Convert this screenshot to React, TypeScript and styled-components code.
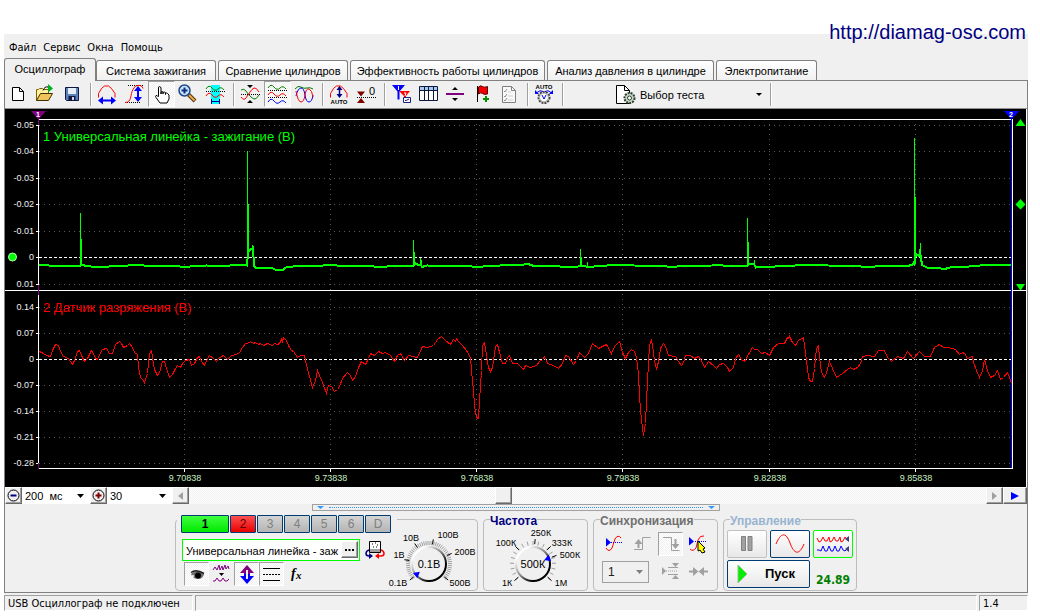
import React from "react";
import styled, { createGlobalStyle, css } from "styled-components";

const SANS = '"Liberation Sans", Arial, sans-serif';
const UI = '"DejaVu Sans Condensed", "DejaVu Sans", sans-serif';
const FACE = "#f0f0f0";
const checker = css`
  background: repeating-conic-gradient(#ffffff 0 25%, #f0f0f0 0 50%) 0 0 / 2px 2px;
`;

const GlobalStyle = createGlobalStyle`
  * { box-sizing: border-box; }
  body { margin: 0; background: #fff; color: #000; font: 11px/14px ${SANS}; }
  button, input, select { font: inherit; color: inherit; margin: 0; padding: 0; border-radius: 0; }
`;

const Page = styled.div`
  position: relative;
  padding: 34px 12px 5px 4px;
`;
const SiteLink = styled.a`
  position: absolute;
  top: 20px;
  right: 14px;
  font-size: 20px;
  line-height: 24px;
  color: #000080;
  text-decoration: none;
`;
const Window = styled.main`
  background: ${FACE};
`;
const MenuBar = styled.nav`
  display: flex;
  gap: 7px;
  height: 24px;
  padding: 7px 5px 0;
  font-family: ${UI};
`;
const MenuItem = styled.button`
  border: 0;
  background: none;
  height: 14px;
  line-height: 14px;
`;
const TabStrip = styled.div`
  display: flex;
  align-items: flex-end;
  gap: 2px;
  height: 22px;
`;
const Tab = styled.button<{ $active?: boolean; $w: number }>`
  width: ${(p) => p.$w}px;
  height: ${(p) => (p.$active ? 23 : 20)}px;
  margin-bottom: ${(p) => (p.$active ? -1 : 0)}px;
  margin-right: ${(p) => (p.$active ? -2 : 0)}px;
  padding-bottom: ${(p) => (p.$active ? 2 : 0)}px;
  border: 1px solid #808080;
  border-bottom: 0;
  border-radius: 3px 3px 0 0;
  background: ${(p) => (p.$active ? FACE : "linear-gradient(#ffffff, #f0f0f0)")};
  white-space: nowrap;
  z-index: ${(p) => (p.$active ? 1 : 0)};
`;
const TabPage = styled.div`
  border: 1px solid #808080;
`;
const Toolbar = styled.div`
  display: flex;
  align-items: center;
  height: 28px;
  border-bottom: 1px solid #909090;
  padding-bottom: 1px;
`;
const ToolButton = styled.button<{ $on?: boolean }>`
  display: flex;
  width: 27px;
  height: 26px;
  border: 1px solid transparent;
  background: none;
  ${(p) => p.$on && checker}
  ${(p) => p.$on && css`border-color: #a0a0a0 #fff #fff #a0a0a0;`}
  svg { flex: none; margin: 0 -1px; }
`;
const Divider = styled.span`
  flex: none;
  width: 2px;
  height: 23px;
  margin: 0 2px 0 4px;
  border-left: 1px solid #a0a0a0;
  border-right: 1px solid #fff;
`;
const TestPicker = styled.button`
  display: flex;
  align-items: center;
  gap: 4px;
  width: 150px;
  height: 26px;
  margin-left: 50px;
  padding-top: 1px;
  border: 0;
  background: none;
  text-align: left;
  span { flex: 1; }
`;
const Screen = styled.svg`
  display: block;
  width: 100%;
  height: auto;
  background: #000;
  border-right: 1px solid #fff;
`;
const ScrollRow = styled.div`
  display: flex;
  height: 17px;
  background: #fff;
`;
const Raised = styled.button<{ $w?: number }>`
  display: flex;
  flex: none;
  align-items: center;
  justify-content: center;
  width: ${(p) => p.$w || 17}px;
  height: 17px;
  border: 1px solid;
  border-color: #fff #696969 #696969 #fff;
  box-shadow: inset -1px -1px 0 #a0a0a0;
  background: ${FACE};
`;
const PickWrap = styled.label<{ $w: number }>`
  position: relative;
  display: block;
  flex: none;
  width: ${(p) => p.$w}px;
  svg { position: absolute; right: 6px; top: 7px; pointer-events: none; }
`;
const Pick = styled.select`
  appearance: none;
  display: block;
  width: 100%;
  height: 17px;
  border: 0;
  padding: 0 3px;
  background: #fff;
  white-space: pre;
  outline: none;
`;
const Track = styled.div`
  display: grid;
  grid-template-columns: 306fr 17px 474fr;
  flex: 1;
  ${checker}
  & > * { grid-column: 2; }
`;
const Splitter = styled.div`
  display: flex;
  align-items: center;
  gap: 5px;
  width: 408px;
  height: 7px;
  margin: 0 auto;
  padding: 0 4px;
  border: 1px solid #a0a0a0;
`;
const Dots = styled.span`
  flex: 1;
  height: 1px;
  border-top: 1px dotted #3399ff;
`;
const Panels = styled.div`
  display: flex;
  justify-content: center;
  gap: 5px;
  padding: 8px 0 1px;
  height: 81px;
`;
const Group = styled.section<{ $w: number }>`
  width: ${(p) => p.$w}px;
  height: 72px;
  border: 1px solid #bcbcbc;
  border-radius: 4px;
`;
const GroupTitle = styled.h2<{ $color: string }>`
  width: fit-content;
  height: 14px;
  margin: -6px 0 0 6px;
  font-size: 12px;
  line-height: 14px;
  font-weight: bold;
  color: ${(p) => p.$color};
  background: ${FACE};
`;
const ChannelGroup = styled(Group)`
  display: grid;
  grid-template-columns: 208px 1fr;
  align-items: start;
  & > svg { margin-top: 8px; }
`;
const ChannelRow = styled.div`
  display: flex;
  gap: 1px;
  width: 220px;
  height: 18px;
  margin: -5px 0 0 1px;
  padding-left: 4px;
  background: ${FACE};
`;
const channelTone = {
  green: "linear-gradient(#40ff40, #00e800)",
  red: "linear-gradient(#ff5050, #e80000)",
  off: "linear-gradient(#d4d4d4, #b4b4b4)",
};
const Channel = styled.button<{ $tone: "green" | "red" | "off" }>`
  flex: none;
  width: ${(p) => (p.$tone === "green" ? 48 : 26)}px;
  height: 18px;
  border: 1px solid #003c74;
  border-radius: 1px;
  background: ${(p) => channelTone[p.$tone]};
  color: ${(p) => (p.$tone === "off" ? "#808080" : p.$tone === "red" ? "#600000" : "#000")};
  font-weight: ${(p) => (p.$tone === "green" ? "bold" : "normal")};
  font-size: 12px;
  line-height: 14px;
`;
const NameRow = styled.div`
  display: flex;
  align-items: center;
  gap: 4px;
  margin: 5px 0 0 6px;
`;
const NameBox = styled.div`
  display: flex;
  flex: none;
  width: 178px;
  height: 22px;
  padding-top: 1px;
  padding-right: 1px;
  border: 1px solid #00ff00;
  background: #fff;
`;
const NameInput = styled.input`
  flex: 1;
  min-width: 0;
  border: 0;
  padding: 0 0 0 3px;
  outline: none;
  background: none;
`;
const IconButton = styled.button<{ $on?: boolean }>`
  display: flex;
  flex: none;
  width: 25px;
  height: 24px;
  border: 1px solid transparent;
  background: none;
  ${(p) => p.$on && checker}
  ${(p) => p.$on && css`border-color: #a0a0a0 #fff #fff #a0a0a0;`}
  svg { flex: none; margin: -1px; }
`;
const IconRow = styled.div`
  display: flex;
  padding-left: 8px;
`;
const Dial = styled.svg`
  display: block;
`;
const SyncGrid = styled.div`
  display: grid;
  grid-template-columns: repeat(4, 24px);
  column-gap: 4px;
  row-gap: 5px;
  padding: 4px 0 0 8px;
`;
const SyncSelect = styled.label`
  position: relative;
  display: block;
  grid-column: span 2;
  width: 47px;
  height: 22px;
  svg { position: absolute; right: 6px; top: 9px; pointer-events: none; }
  select {
    appearance: none;
    width: 47px;
    height: 22px;
    padding: 0 5px;
    border: 1px solid #a0a0a0;
    background: ${FACE};
    color: #202020;
    opacity: 1;
    font-size: 12px;
    outline: none;
  }
`;
const ControlGrid = styled.div`
  display: grid;
  grid-template-columns: 40px 40px 40px;
  grid-template-rows: 28px 28px;
  gap: 2px 3px;
  padding: 2px 0 0 3px;
`;
const PushButton = styled.button<{ $edge: string; $wide?: boolean }>`
  display: flex;
  align-items: center;
  justify-content: ${(p) => (p.$wide ? "space-between" : "center")};
  grid-column: ${(p) => (p.$wide ? "span 2" : "auto")};
  padding: ${(p) => (p.$wide ? "0 14px 0 9px" : "0")};
  border: 1px solid ${(p) => p.$edge};
  border-radius: 2px;
  background: linear-gradient(#ffffff, #e8e8e8);
  font-size: 13px;
  font-weight: bold;
`;
const Reading = styled.output`
  align-self: center;
  padding-top: 12px;
  text-align: center;
  font: bold 12px/14px ${UI};
  color: #008000;
`;
const StatusBar = styled.footer`
  display: grid;
  grid-template-columns: 189px 1fr 49px;
  gap: 2px;
  padding-top: 2px;
  font-family: ${UI};
`;
const StatusCell = styled.div`
  height: 16px;
  padding: 1px 3px 0;
  border: 1px solid;
  border-color: #a0a0a0 #fff #fff #a0a0a0;
  white-space: nowrap;
`;

/* ---------- toolbar icons, drawn on a 27 x 24 field ---------- */
const Ico = ({ children, w = 27 }: { children: React.ReactNode; w?: number }) => (
  <svg width={w} height="24" viewBox={`0 0 ${w} 24`} fill="none" aria-hidden="true">
    {children}
  </svg>
);
const wave = (y: number) => `M4 ${y + 1}q3-5 6-1t6 1t6 1`;

const icons: Record<string, React.ReactNode> = {
  new: <path d="M7.5 5.5h7l4 4v9h-11zM14.5 5.5v4h4" fill="#fff" stroke="#000" />,
  open: (
    <>
      <path d="M4.5 18.5v-11h2l1-1h3l1 1h5v4" fill="#fff3a0" stroke="#806000" />
      <path d="M4.5 18.5l4-7h12l-4 7z" fill="#f2c45c" stroke="#403000" />
      <path d="M11 8.5c1-3 3-4 5-3.500" stroke="#000" />
      <path d="M16 2l5 4.5l-5 4z" fill="#00b020" />
    </>
  ),
  save: (
    <>
      <path d="M6.5 5.5h13v13h-12l-1-1z" fill="#5c80b8" stroke="#101840" />
      <path d="M9 6h8v6h-8z" fill="#e8eef8" />
      <path d="M9.5 14h7v4h-7z" fill="#101840" />
      <path d="M13 15h2v3h-2z" fill="#d0d8e8" />
    </>
  ),
  period: (
    <>
      <path d="M4.5 15.5v-4l3-5l3-2.5h4l3 2.5l3.5 5v4" stroke="#f00" />
      <path d="M6 18.5h14" stroke="#00f" strokeWidth="2" />
      <path d="M4 18.5l5-4v8zM22 18.5l-5-4v8z" fill="#00f" />
    </>
  ),
  amplitude: (
    <>
      <path d="M7 3.5h15M4 20.5h15" stroke="#000" strokeDasharray="1 1" />
      <path d="M4 20.5c7 0 5-8 8-13q2-4 4-4h3q2 0 3 3" stroke="#f00" />
      <path d="M17 7v10" stroke="#00f" strokeWidth="2" />
      <path d="M17 4l-4 5h8zM17 20l-4-5h8z" fill="#00f" />
    </>
  ),
  hand: (
    <path
      d="M10.5 14.5v-8.5q0-1.5 1-1.5t1.5 1.5v6v-2q1-1 2 0v2v-1.5q1-1 2.5 0v2v-1q1-1 2 0l1.5 1.5v4l-2 4h-7l-4-5.5q-1-1.5 0-2t2.5 1.5"
      fill="#fff"
      stroke="#000"
    />
  ),
  zoom: (
    <>
      <path d="M13.5 12.5l6.5 6.5" stroke="#503818" strokeWidth="4" />
      <path d="M14 13l5.5 5.5" stroke="#f0a840" strokeWidth="2" />
      <circle cx="9.5" cy="8.5" r="5.5" fill="#c8e4ff" stroke="#204888" strokeWidth="1.5" />
      <path d="M9.5 5.5v6M6.5 8.5h6" stroke="#103080" strokeWidth="2" />
    </>
  ),
  region: (
    <>
      <path d="M9 3h9v19h-9z" fill="#00ffff" />
      <path d={wave(6)} stroke="#008000" />
      <path d="M4 9.5h19" stroke="#000" strokeDasharray="1 1" />
      <path d={wave(13)} stroke="#f00" />
      <path d="M9.5 17v5M17.5 17v5M10 19.5h7" stroke="#0000a0" />
    </>
  ),
  merge: (
    <>
      <path d="M4 12.5h19" stroke="#000" strokeDasharray="1 1" />
      <path d="M4 8q3-2 5 1t4 5t4 3t5-4" stroke="#008000" />
      <path d="M4 15q3 4 5 1t4-6t4-4t5 4" stroke="#f00" />
      <path d="M10 3h6l-3 3zM10 21h6l-3-3z" fill="#000" />
    </>
  ),
  stack: (
    <>
      <path d={wave(5)} stroke="#008000" />
      <path d="M4 8.5h19M4 15.5h19" stroke="#000" strokeDasharray="1 1" />
      <path d={wave(12)} stroke="#f00" />
      <path d={wave(19)} stroke="#00f" />
    </>
  ),
  overlay: (
    <>
      <path d="M4 7q3-4 6-2t6 1t6 1" stroke="#008000" />
      <path d="M5 14q2-8 5-8t4 7t4 7t4-7" stroke="#00f" />
      <path d="M5 9q2 11 5 11t4-7t4-6t4 8" stroke="#f00" />
    </>
  ),
  autoY: (
    <>
      <path d="M4.5 15.5v-4l3-5l3-2.5h4l3 2.5l3.5 5v4" stroke="#f00" />
      <path d="M13.5 7v7" stroke="#000080" strokeWidth="1.5" />
      <path d="M13.5 4l-3 4h6zM13.5 16l-3-4h6z" fill="#000080" />
      <text x="13" y="22" fontSize="6" fontWeight="bold" textAnchor="middle" fill="#000">AUTO</text>
    </>
  ),
  zero: (
    <>
      <path d="M4 15.5h19" stroke="#000" strokeDasharray="1 1" />
      <path d="M4 9.5h8l-4 5zM4 21h8l-4-5z" fill="#800000" />
      <text x="16" y="13" fontSize="11" fill="#000">0</text>
    </>
  ),
  markers: (
    <>
      <path d="M4 3h13l-5.5 6.5v8h-2v-8z" fill="#00f" />
      <path d="M11 9h11l-4 5v5h-2v-5z" fill="#f00" />
      <path d="M10.5 4v4M16 11h2l-1 3" stroke="#fff" />
      <path d="M15.5 15.5h7v5h-7z" fill="#fff" stroke="#202080" />
      <path d="M17 18.5h1l3-1.5" stroke="#202080" />
    </>
  ),
  table: (
    <>
      <path d="M4.5 4.5h18v14h-18z" fill="#fff" stroke="#101840" />
      <path d="M5 5h17v3h-17z" fill="#a8c8f0" />
      <path d="M4 8.5h18M9.5 4v14M13.5 4v14M18.5 4v14" stroke="#101840" />
    </>
  ),
  split: (
    <>
      <path d="M4 12h18" stroke="#800080" strokeWidth="2" />
      <path d="M13 5l3 3h-6zM13 19l3-3h-6z" fill="#000" />
    </>
  ),
  flag: (
    <>
      <path d="M8.5 4v16" stroke="#000" />
      <path d="M9.5 5q2-2 4-.5t5 0v7.5q-3 1-5-.5t-4 .5z" fill="#f00000" stroke="#600000" />
      <path d="M17 14v6M14 17h6" stroke="#009000" strokeWidth="2" />
    </>
  ),
  checklist: (
    <>
      <path d="M6.5 4.5h9l4 4v12h-13z" fill="#f8f8f8" stroke="#808080" />
      <path d="M15.5 4.5v4h4" stroke="#808080" />
      <path d="M8 9l1 1l2-3M8 14l1 1l2-3M8 18l1 1l2-3" stroke="#909090" />
      <path d="M12 10h3M12 14h5M12 18h5" stroke="#d0d0d0" />
    </>
  ),
  autoKnob: (
    <>
      <text x="13" y="7" fontSize="6" fontWeight="bold" textAnchor="middle" fill="#000">AUTO</text>
      <path d="M6 10.5q3-3 6-1M20 10.5q-3-3-6-1" stroke="#00f" />
      <path d="M4 8v4h4zM22 8v4h-4z" fill="#00f" />
      <circle cx="13" cy="15.5" r="5.5" fill="#fff" stroke="#404040" strokeWidth="2" strokeDasharray="2 1" />
      <circle cx="13" cy="15.5" r="4.5" fill="#fff" stroke="#909090" />
      <path d="M11 13l2 4l2-4" stroke="#00f" />
    </>
  ),
};

const toolGroups: [string, string, boolean?][][] = [
  [["new", "Создать"], ["open", "Открыть"], ["save", "Сохранить"]],
  [["period", "Период"], ["amplitude", "Амплитуда"], ["hand", "Перемещение", true], ["zoom", "Масштаб"], ["region", "Область"]],
  [["merge", "Совместить"], ["stack", "Раздельно", true], ["overlay", "Наложение"]],
  [["autoY", "Автомасштаб"], ["zero", "Ноль"]],
  [["markers", "Маркеры"], ["table", "Таблица"], ["split", "Разделить"], ["flag", "Метка"], ["checklist", "Отчёт"]],
  [["autoKnob", "Авто"]],
];

const tabs: [string, number][] = [
  ["Осциллограф", 92],
  ["Система зажигания", 120],
  ["Сравнение цилиндров", 130],
  ["Эффективность работы цилиндров", 195],
  ["Анализ давления в цилиндре", 167],
  ["Электропитание", 101],
];

/* ---------- oscilloscope traces ---------- */
const ignition =
  "39,265 48,265 50,266 80,266 81,265 88,266 96,267.5 107,267 111,266 128,265.5 137,264.5 148,266 178,266 184,267.5 190,266.5 206,265.5 228,266 232,265 247,265.5 248,252 250,250 253,248 254,266 256,268.5 272,268 276,270 283,270 286,267.5 293,266.5 320,266 330,264.5 340,266 372,266 379,267.5 387,266.5 413,266 415,263 418,265 421,265 422,267 427,265.5 470,266 476,267.5 483,266.5 500,265.5 520,265 528,264 534,266 560,266.5 573,267.5 580,266 583,265.5 588,267 600,266 622,264.5 634,265.5 664,266 672,267.5 680,266 712,265.5 718,264.5 726,266 747,266 749,264.5 754,264 756,267.5 770,267 780,266 810,265 817,264.5 828,265.5 858,266 866,267.5 880,266 908,266 914,264 916,254 919,256 921,256 922,265 928,268 940,268 943,269.5 950,267.5 964,267 986,265 1000,265.5 1011,264.5";
const sparks =
  "M80.5 266V213M81.5 266V239M247.5 266V151M248.5 256V204M252.5 256V245M413.5 266V240M414.5 266V252M420.5 266V258M421.5 268V260M580.5 266V249M581.5 266V257M587.5 268V262M747.5 266V218M748.5 266V242M754.5 266V260M914.5 266V138M915.5 264V197M920.5 262V243M919.5 256V249";
/* three samples per pixel along both axes */
const vacuum =
  "117,184 128,188 137,195 150,199 157,180 165,161 173,166 180,184 190,199 205,203 217,223 223,210 231,184 237,179 244,196 253,213 262,203 272,180 280,188 285,203 292,207 298,193 305,177 317,175 328,190 337,188 346,162 357,152 364,158 370,170 380,166 388,160 397,172 403,185 410,192 415,232 420,260 428,270 433,276 440,250 446,190 452,180 457,200 462,238 470,255 477,245 485,214 491,214 497,235 506,260 515,252 524,234 531,226 541,230 547,220 555,210 566,207 574,226 582,218 590,200 597,197 603,213 611,226 620,205 628,196 640,203 647,213 655,204 670,195 682,206 692,195 708,192 717,186 726,170 735,158 742,160 750,154 758,160 765,157 773,163 780,160 788,164 800,159 815,165 822,158 830,163 836,160 843,148 847,152 850,140 858,150 863,165 868,170 873,180 880,184 890,202 900,196 913,196 918,225 926,258 937,291 944,270 950,241 957,255 965,275 977,308 985,284 993,287 1003,304 1010,296 1018,288 1027,263 1041,246 1049,254 1057,269 1065,258 1075,230 1082,213 1095,223 1103,203 1110,190 1122,196 1135,182 1145,188 1155,186 1170,196 1183,212 1191,194 1200,190 1213,210 1225,196 1251,200 1265,168 1280,170 1300,166 1310,148 1322,137 1335,150 1351,162 1358,148 1365,152 1368,143 1375,152 1385,165 1397,180 1409,200 1414,240 1418,300 1423,345 1428,380 1433,385 1438,330 1443,240 1447,165 1451,156 1457,195 1463,230 1469,244 1475,230 1481,190 1486,168 1492,161 1498,185 1505,220 1515,220 1521,200 1527,196 1535,218 1550,220 1568,238 1575,226 1590,232 1608,226 1618,212 1625,208 1631,198 1642,218 1660,224 1675,233 1685,220 1695,196 1705,197 1718,222 1727,210 1737,185 1753,200 1763,188 1775,160 1795,175 1817,163 1833,190 1843,168 1858,152 1867,185 1876,203 1885,186 1892,177 1901,184 1908,202 1913,250 1917,320 1922,390 1929,434 1934,400 1939,330 1943,220 1948,165 1952,148 1957,165 1962,210 1969,238 1975,212 1980,175 1988,160 1995,168 2005,194 2025,198 2035,212 2042,226 2049,216 2055,196 2070,196 2082,204 2095,197 2102,210 2112,232 2125,213 2138,226 2147,235 2158,222 2170,218 2180,230 2188,244 2198,230 2206,205 2213,193 2222,207 2233,212 2243,193 2257,170 2263,178 2270,176 2282,190 2295,186 2308,194 2320,172 2335,158 2352,160 2360,140 2365,144 2368,138 2375,155 2384,166 2395,150 2408,142 2413,165 2418,210 2423,260 2430,274 2437,272 2442,235 2447,175 2453,166 2458,200 2464,245 2471,262 2478,245 2488,214 2497,235 2508,262 2525,250 2540,237 2550,232 2560,236 2570,232 2580,220 2585,198 2600,194 2623,198 2635,180 2652,180 2662,200 2673,213 2692,198 2708,203 2722,183 2738,203 2758,184 2772,197 2790,197 2803,172 2818,161 2830,170 2845,172 2865,176 2878,192 2885,186 2892,190 2902,204 2915,197 2920,215 2928,240 2936,262 2945,240 2953,206 2960,240 2970,260 2982,254 2990,240 3000,268 3010,262 3020,246 3027,260 3033,278"
    .split(" ")
    .map((pair) => pair.split(",").map(Number))
    .map(([x, y]) => `${Math.round(x / 3) + 0.5},${Math.round(290 + y / 3) + 0.5}`)
    .join(" ");

const upperScale: [string, number][] = [
  ["-0.05", 125], ["-0.04", 151], ["-0.03", 178], ["-0.02", 204], ["-0.01", 231], ["0", 257], ["0.01", 284],
];
const lowerScale: [string, number][] = [
  ["0.14", 307], ["0.07", 333], ["0", 359], ["-0.07", 385], ["-0.14", 411], ["-0.21", 437], ["-0.28", 463],
];
const timeScale: [string, number][] = [
  ["9.70838", 184], ["9.73838", 330], ["9.76838", 476], ["9.79838", 622], ["9.82838", 769], ["9.85838", 915],
];

const Scope = () => (
  <Screen viewBox="5 109 1021 378" fontFamily="Liberation Sans, Arial, sans-serif" role="img" aria-label="Осциллограмма">
    <g shapeRendering="crispEdges" fill="none">
      {[...upperScale, ...lowerScale].map(([label, y]) => (
        <g key={y}>
          <path
            d={`M39 ${y}.5H1011`}
            stroke={label === "0" ? "#fff" : "#585858"}
            strokeDasharray={label === "0" ? "3 2" : "1 4"}
          />
          <path d={`M36 ${y}.5h2`} stroke="#fff" />
        </g>
      ))}
      {timeScale.map(([label, x]) => (
        <g key={label}>
          <path d={`M${x}.5 124V468`} stroke="#585858" strokeDasharray="1 4" />
          <path d={`M${x}.5 469v3`} stroke="#fff" />
        </g>
      ))}
      <path d="M38 119.5H1013M5 290.5H1011M1013 290.5H1026M38 468.5H1013M38.5 119V468M1012.5 119V468" stroke="#fff" />
      <path d="M1011.5 118V468" stroke="#0000ff" />
      <path d="M38.5 118v7M38.5 285v10M38.5 463v6" stroke="#800080" />
      <polyline points={ignition} stroke="#00ff00" strokeWidth="2" />
      <path d={sparks} stroke="#00ff00" />
      <polyline points={vacuum} stroke="#ff0000" />
    </g>
    <path d="M31 111h15l-7 8h-1z" fill="#800080" />
    <path d="M1004 111h15l-7 8h-1z" fill="#0000ff" />
    <g fontSize="7" fontWeight="bold" fill="#fff" textAnchor="middle">
      <text x="38" y="117">1</text>
      <text x="1011" y="117">2</text>
    </g>
    <g fill="#00ff00">
      <path d="M1020.5 119l5 7h-10zM1020.5 199l5 5.5l-5 5l-5-5zM1016 284h9l-4 6h-1z" />
      <circle cx="12.5" cy="257" r="4" stroke="#b0ffb0" />
      <text x="43" y="141" fontSize="13">1 Универсальная линейка - зажигание (В)</text>
    </g>
    <text x="43" y="312" fontSize="13" fill="#ff0000">2 Датчик разряжения (В)</text>
    <g fontSize="9" fill="#f0f0f0" textAnchor="end">
      {[...upperScale, ...lowerScale].map(([label, y]) => (
        <text key={y} x="34" y={y + 3}>{label}</text>
      ))}
    </g>
    <g fontSize="9" fill="#c8f0c0" textAnchor="middle">
      {timeScale.map(([label, x]) => (
        <text key={label} x={x + 1} y="481">{label}</text>
      ))}
    </g>
  </Screen>
);

/* ---------- rotary knobs ---------- */
type KnobProps = {
  id: string;
  w: number;
  cx: number;
  value: string;
  pointer: number;
  labels: [string, number, number][];
  marks: number[];
};
const at = (cx: number, cy: number, r: number, deg: number) => {
  const a = ((deg - 90) * Math.PI) / 180;
  return [cx + r * Math.cos(a), cy + r * Math.sin(a)].map((n) => n.toFixed(1)).join(" ");
};
const Knob = ({ id, w, cx, value, pointer, labels, marks }: KnobProps) => {
  const cy = 36;
  const dense = id === "volt";
  const ticks = Array.from({ length: dense ? 50 : 19 }, (_, i) => -132 + (264 / (dense ? 49 : 18)) * i);
  return (
    <Dial width={w} height="62" viewBox={`0 0 ${w} 62`} role="img" aria-label={value}>
      <defs>
        <linearGradient id={id} x1="0.1" y1="0.1" x2="0.9" y2="0.9">
          <stop offset="0.1" stopColor="#fff" />
          <stop offset="0.5" stopColor="#808080" />
          <stop offset="0.8" stopColor="#000" />
        </linearGradient>
      </defs>
      {ticks.map((d) => (
        <path key={d} d={`M${at(cx, cy, 19, d)}L${at(cx, cy, 23, d)}`} stroke="#a0a0a0" />
      ))}
      {marks.map((d) => (
        <path key={d} d={`M${at(cx, cy, 20, d)}L${at(cx, cy, 25, d)}`} stroke="#000" />
      ))}
      <circle cx={cx} cy={cy} r="17" fill="#f0f0f0" stroke={`url(#${id})`} strokeWidth="2" />
      <path d="M-3.5-18h7l-3.5 6z" fill="#00f" transform={`translate(${cx} ${cy}) rotate(${pointer})`} />
      <text x={cx} y={cy + 4} fontSize="11" textAnchor="middle">{value}</text>
      <g fontSize="9" textAnchor="middle">
        {labels.map(([t, x, y]) => (
          <text key={t} x={x} y={y}>{t}</text>
        ))}
      </g>
    </Dial>
  );
};

const DownArrow = ({ fill = "#000" }: { fill?: string }) => (
  <svg width="7" height="4" viewBox="0 0 7 4"><path d="M0 0h7l-3.5 4z" fill={fill} /></svg>
);
const CircleSign = ({ plus }: { plus?: boolean }) => (
  <svg width="15" height="15" viewBox="0 0 15 15" fill="none">
    <circle cx="7.5" cy="7.5" r="5.5" stroke="#000" />
    <path d={plus ? "M4.5 7.5h6M7.5 4.5v6" : "M4.5 7.5h6"} stroke={plus ? "#800000" : "#000080"} strokeWidth="2" />
  </svg>
);

export default function App() {
  return (
    <Page>
      <GlobalStyle />
      <SiteLink href="http://diamag-osc.com">http://diamag-osc.com</SiteLink>
      <Window>
        <MenuBar>
          {["Файл", "Сервис", "Окна", "Помощь"].map((m) => <MenuItem key={m}>{m}</MenuItem>)}
        </MenuBar>
        <TabStrip role="tablist">
          {tabs.map(([name, w], i) => (
            <Tab key={name} role="tab" aria-selected={i === 0} $active={i === 0} $w={w}>{name}</Tab>
          ))}
        </TabStrip>
        <TabPage>
          <Toolbar>
            {toolGroups.map((group, i) => (
              <React.Fragment key={i}>
                {group.map(([id, label, on]) => (
                  <ToolButton key={id} aria-label={label} aria-pressed={!!on} $on={on}><Ico>{icons[id]}</Ico></ToolButton>
                ))}
                <Divider />
              </React.Fragment>
            ))}
            <TestPicker>
              <Ico w={20}>
                <path d="M.5 2.5h8l5 5v13h-13z" fill="#fff" stroke="#000" />
                <path d="M8.5 2.5v5h5" stroke="#000" />
                <circle cx="13.5" cy="15" r="5" fill="#c8d8c8" stroke="#304030" strokeWidth="2" strokeDasharray="2 1" />
                <circle cx="13.5" cy="15" r="2" fill="#fff" stroke="#304030" />
              </Ico>
              <span>Выбор теста</span>
              <svg width="10" height="4" viewBox="0 0 10 4"><path d="M0 0h6l-3 3z" fill="#000" /></svg>
            </TestPicker>
            <Divider />
          </Toolbar>
          <Scope />
          <ScrollRow>
            <Raised aria-label="Уменьшить"><CircleSign /></Raised>
            <PickWrap $w={68}>
              <Pick aria-label="Развёртка"><option>{"200\u00a0 мс"}</option></Pick>
              <DownArrow />
            </PickWrap>
            <Raised aria-label="Увеличить"><CircleSign plus /></Raised>
            <PickWrap $w={65}>
              <Pick aria-label="Масштаб"><option>30</option></Pick>
              <DownArrow />
            </PickWrap>
            <Raised aria-label="Назад"><svg width="5" height="8" viewBox="0 0 5 8"><path d="M5 0v8l-5-4z" fill="#a0a0a0" /></svg></Raised>
            <Track><Raised aria-label="Ползунок" /></Track>
            <Raised aria-label="Вперёд"><svg width="5" height="8" viewBox="0 0 5 8"><path d="M0 0v8l5-4z" fill="#a0a0a0" /></svg></Raised>
            <Raised $w={24} aria-label="Воспроизвести"><svg width="8" height="8" viewBox="0 0 8 8"><path d="M0 0v8l8-4z" fill="#00f" /></svg></Raised>
          </ScrollRow>
          <Splitter>
            <svg width="7" height="3" viewBox="0 0 7 3"><path d="M0 0h7l-3.5 3z" fill="#3399ff" /></svg>
            <Dots />
            <svg width="7" height="3" viewBox="0 0 7 3"><path d="M0 0h7l-3.5 3z" fill="#3399ff" /></svg>
          </Splitter>
          <Panels>
            <ChannelGroup $w={303} aria-label="Каналы">
              <div>
                <ChannelRow>
                  <Channel $tone="green">1</Channel>
                  <Channel $tone="red">2</Channel>
                  {["3", "4", "5", "6", "D"].map((c) => <Channel key={c} $tone="off">{c}</Channel>)}
                </ChannelRow>
                <NameRow>
                  <NameBox>
                    <NameInput aria-label="Название канала" defaultValue="Универсальная линейка - заж" />
                    <Raised aria-label="Выбрать"><svg width="9" height="2" viewBox="0 0 9 2"><path d="M0 0h2v2h-2zM3.5 0h2v2h-2zM7 0h2v2h-2z" /></svg></Raised>
                  </NameBox>
                  <IconButton aria-label="Датчик">
                    <svg width="25" height="24" viewBox="0 0 25 24" fill="none">
                      <path d="M5.5 3.5h11v11h-11z" fill="#fff" stroke="#000" />
                      <path d="M6 11h10v3h-10z" fill="#a0a0a0" />
                      <path d="M8 6h1M11 5h1M13 7h1M9 9h1M12 9h1" stroke="#000" />
                      <path d="M5 12q-3 1-3 3.5t3 2.5h1" stroke="#000080" strokeWidth="1.5" />
                      <path d="M17 12q3 1 3 3.5t-3 2.5h-3" stroke="#f00" strokeWidth="1.5" />
                      <path d="M5 15l4 3l-4 3z" fill="#000080" />
                      <path d="M15 15l-4 3l4 3z" fill="#f00" />
                    </svg>
                  </IconButton>
                </NameRow>
                <IconRow>
                  <IconButton $on aria-label="Показать канал">
                    <svg width="25" height="24" viewBox="0 0 25 24" fill="none">
                      <path d="M7 12q5-6 13 0q-1 5-6 5t-7-5z" fill="#707070" />
                      <path d="M7 10.5q5-4 13 1" stroke="#202020" strokeWidth="1.5" />
                      <circle cx="14" cy="13.5" r="3" fill="#000" />
                      <path d="M8 14h2" stroke="#fff" strokeWidth="1.5" />
                    </svg>
                  </IconButton>
                  <IconButton aria-label="Фильтр">
                    <svg width="25" height="24" viewBox="0 0 25 24" fill="none">
                      <path d="M4 8l2-3l2 3l2-5l1 5l2-4l1 4l2-5l1 4l2-3l1 3M4 19h2l2-3l2 3h2l2-3l2 3h2l2-2" stroke="#800080" />
                      <path d="M10 11h5l-2.5 3z" fill="#000" />
                    </svg>
                  </IconButton>
                  <IconButton $on aria-label="Инвертировать">
                    <svg width="25" height="24" viewBox="0 0 25 24">
                      <path d="M13 3l7 8h-4v2h-6v-2h-4z" fill="#800080" />
                      <path d="M13 22l7-8h-4v-2h-6v2h-4z" fill="#00f" />
                      <path d="M12 8h2v9h-2z" fill="#f0f0f0" />
                    </svg>
                  </IconButton>
                  <IconButton $on aria-label="Линии">
                    <svg width="25" height="24" viewBox="0 0 25 24" fill="none">
                      <path d="M4 6.5h17M4 18.5h17" stroke="#000" />
                      <path d="M4 12.5h17" stroke="#000" strokeDasharray="2 1" />
                    </svg>
                  </IconButton>
                  <IconButton aria-label="Функция">
                    <svg width="25" height="24" viewBox="0 0 25 24" fontFamily="Liberation Serif, serif" fontStyle="italic" fontWeight="bold">
                      <text x="7" y="16" fontSize="14">f</text>
                      <text x="12" y="17" fontSize="11">x</text>
                    </svg>
                  </IconButton>
                </IconRow>
              </div>
              <Knob
                id="volt" w={93} cx={45} value="0.1В" pointer={-130}
                marks={[-130, -80, -35, 10, 65, 130]}
                labels={[["0.1В", 14, 58], ["1В", 15, 30], ["10В", 27, 13], ["100В", 64, 10], ["200В", 81, 27], ["500В", 76, 58]]}
              />
            </ChannelGroup>
            <Group $w={105}>
              <GroupTitle $color="#000080">Частота</GroupTitle>
              <Knob
                id="rate" w={103} cx={49} value="500К" pointer={70}
                marks={[-132, -45, 5, 45, 70, 132]}
                labels={[["1К", 23, 58], ["100К", 22, 18], ["250К", 57, 8], ["333К", 78, 18], ["500К", 86, 30], ["1М", 77, 58]]}
              />
            </Group>
            <Group $w={125}>
              <GroupTitle $color="#707070">Синхронизация</GroupTitle>
              <SyncGrid>
                <IconButton aria-label="Уровень">
                  <svg width="25" height="24" viewBox="0 0 25 24" fill="none">
                    <path d="M9 10.5h12" stroke="#00f" strokeDasharray="1 1" />
                    <path d="M4 6l5 4.5l-5 4z" fill="#00f" />
                    <path d="M4 16q3 5 6 0l3-9q3-5 6-1" stroke="#f00" />
                  </svg>
                </IconButton>
                <IconButton aria-label="Фронт">
                  <svg width="25" height="24" viewBox="0 0 25 24" fill="none">
                    <path d="M4 17.5h8.5v-12h8" stroke="#a0a0a0" />
                    <path d="M8.5 9v7" stroke="#a0a0a0" strokeWidth="2" />
                    <path d="M8.5 7l-4 5h8z" fill="#a0a0a0" />
                  </svg>
                </IconButton>
                <IconButton $on aria-label="Спад">
                  <svg width="25" height="24" viewBox="0 0 25 24" fill="none">
                    <path d="M5 5.5h8.5v13h8" stroke="#a0a0a0" />
                    <path d="M17.5 7v7" stroke="#a0a0a0" strokeWidth="2" />
                    <path d="M17.5 17l-4-5h8z" fill="#a0a0a0" />
                  </svg>
                </IconButton>
                <IconButton aria-label="Ручная">
                  <svg width="25" height="24" viewBox="0 0 25 24" fill="none">
                    <path d="M9 9.5h12" stroke="#00f" strokeDasharray="1 1" />
                    <path d="M3 5l5 4.5l-5 4z" fill="#00f" />
                    <path d="M4 17q3 3 6-1l2-8q2-5 6-4" stroke="#f00" />
                    <path d="M12 9l7 7l-2 1l2 3l-3 1l-2-3l-2 1z" fill="#ff0" stroke="#000" />
                  </svg>
                </IconButton>
                <SyncSelect>
                  <select disabled aria-label="Канал синхронизации"><option>1</option></select>
                  <DownArrow fill="#808080" />
                </SyncSelect>
                <IconButton aria-label="Развести">
                  <svg width="25" height="24" viewBox="0 0 25 24" fill="none">
                    <path d="M4 6l4 4l-4 4zM14 2h7l-3.5 4zM14 18h7l-3.5-4z" fill="#a0a0a0" />
                    <path d="M10 6.5h10M10 13.5h10" stroke="#a0a0a0" />
                    <path d="M8 10h12" stroke="#a0a0a0" strokeDasharray="1 1" />
                  </svg>
                </IconButton>
                <IconButton aria-label="Свести">
                  <svg width="25" height="24" viewBox="0 0 25 24" fill="none">
                    <path d="M3 10.5h5M17 10.5h5" stroke="#a0a0a0" strokeWidth="2" />
                    <path d="M7 6l5.5 4.5l-5.5 4.5zM18 6l-5.5 4.5l5.5 4.5z" fill="#a0a0a0" />
                  </svg>
                </IconButton>
              </SyncGrid>
            </Group>
            <Group $w={134}>
              <GroupTitle $color="#99b4d1">Управление</GroupTitle>
              <ControlGrid>
                <PushButton $edge="#c0c0c0" disabled aria-label="Пауза">
                  <svg width="12" height="16" viewBox="0 0 12 16"><path d="M.5.5h4v14h-4zM7 .5h4v14h-4z" fill="#a0a0a0" stroke="#808080" /></svg>
                </PushButton>
                <PushButton $edge="#003c74" aria-label="Один канал">
                  <svg width="30" height="20" viewBox="0 0 30 20" fill="none"><path d="M1 10C6-2 11-2 15 9S24 22 29 10" stroke="#f00" /></svg>
                </PushButton>
                <PushButton $edge="#00ff00" aria-label="Все каналы">
                  <svg width="34" height="20" viewBox="0 0 34 20" fill="none">
                    <path d="M1 4l2 4l2-1l2-4l2 4h2l2-4l1 5l2-1l2-4l2 4h2l2-4l1 5l2-1l2-4l2 3l1-1" stroke="#f00" />
                    <path d="M1 16h2l2 1l2-5l2 5h2l2-5l2 5h2l2-5l2 5h2l2-5l2 4l2 1l2-2" stroke="#00f" />
                    <path d="M33 2v6l-4-3zM33 12v6l-4-3z" fill="#404080" />
                  </svg>
                </PushButton>
                <PushButton $wide $edge="#003c74">
                  <svg width="10" height="18" viewBox="0 0 10 18"><path d="M1 0l9 9l-9 9z" fill="#00f000" stroke="#90c090" /></svg>
                  Пуск
                </PushButton>
                <Reading>24.89</Reading>
              </ControlGrid>
            </Group>
          </Panels>
        </TabPage>
        <StatusBar>
          <StatusCell>USB Осциллограф не подключен</StatusCell>
          <StatusCell />
          <StatusCell>1.4</StatusCell>
        </StatusBar>
      </Window>
    </Page>
  );
}
